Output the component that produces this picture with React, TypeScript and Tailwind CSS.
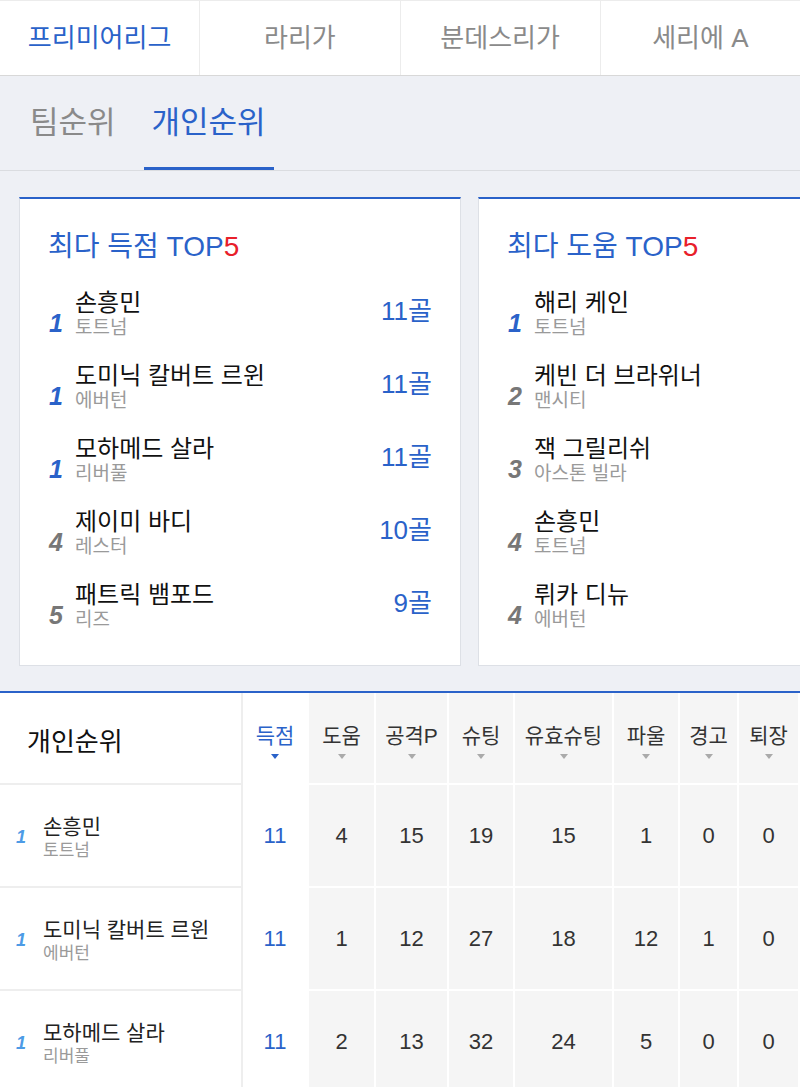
import React from "react";

const leagues = ["프리미어리그", "라리가", "분데스리가", "세리에 A"];

interface RankRow {
  rank: number;
  name: string;
  team: string;
  value?: string;
}

const scorers: RankRow[] = [
  { rank: 1, name: "손흥민", team: "토트넘", value: "11골" },
  { rank: 1, name: "도미닉 칼버트 르윈", team: "에버턴", value: "11골" },
  { rank: 1, name: "모하메드 살라", team: "리버풀", value: "11골" },
  { rank: 4, name: "제이미 바디", team: "레스터", value: "10골" },
  { rank: 5, name: "패트릭 뱀포드", team: "리즈", value: "9골" },
];

const assists: RankRow[] = [
  { rank: 1, name: "해리 케인", team: "토트넘" },
  { rank: 2, name: "케빈 더 브라위너", team: "맨시티" },
  { rank: 3, name: "잭 그릴리쉬", team: "아스톤 빌라" },
  { rank: 4, name: "손흥민", team: "토트넘" },
  { rank: 4, name: "뤼카 디뉴", team: "에버턴" },
];

const columns = [
  { label: "득점", w: "w-[66px]" },
  { label: "도움", w: "w-[67px]" },
  { label: "공격P", w: "w-[73px]" },
  { label: "슈팅", w: "w-[66px]" },
  { label: "유효슈팅", w: "w-[99px]" },
  { label: "파울", w: "w-[66px]" },
  { label: "경고", w: "w-[59px]" },
  { label: "퇴장", w: "w-[61px]" },
];

const players = [
  { rank: 1, name: "손흥민", team: "토트넘", stats: [11, 4, 15, 19, 15, 1, 0, 0] },
  { rank: 1, name: "도미닉 칼버트 르윈", team: "에버턴", stats: [11, 1, 12, 27, 18, 12, 1, 0] },
  { rank: 1, name: "모하메드 살라", team: "리버풀", stats: [11, 2, 13, 32, 24, 5, 0, 0] },
];

const TopCard = ({ title, rows }: { title: string; rows: RankRow[] }) => (
  <div className="w-[442px] shrink-0 bg-white border border-[#dde0e6] border-t-2 border-t-[#2a62c9] pl-[25px] pr-7 pt-[30px] pb-[34px]">
    <h3 className="pl-[3px] text-[28px] leading-[36px] text-[#2a62c9]">
      {title} TOP<span className="text-[#e8202a]">5</span>
    </h3>
    <ul className="mt-[24px] flex flex-col gap-[23px]">
      {rows.map((r, i) => (
        <li key={i} className="flex items-end">
          <span
            className={`w-[18px] mb-[3px] text-right text-[25px] leading-none font-bold italic ${
              r.rank === 1 ? "text-[#2a62c9]" : "text-[#777]"
            }`}
          >
            {r.rank}
          </span>
          <div className="ml-3 flex flex-col">
            <span className="text-[24px] leading-[28px] text-[#111]">{r.name}</span>
            <span className="text-[19px] leading-[22px] text-[#9a9a9a]">{r.team}</span>
          </div>
          {r.value && (
            <span className="ml-auto self-center mb-[6px] text-[26px] text-[#2a62c9]">{r.value}</span>
          )}
        </li>
      ))}
    </ul>
  </div>
);

const App = () => {
  return (
    <div className="w-[800px] overflow-hidden bg-white font-['Liberation_Sans','Noto_Sans_CJK_KR',sans-serif]">
      {/* league tabs */}
      <div className="flex h-[76px] border-t border-t-[#ececec] border-b border-b-[#d8d8d8] bg-white">
        {leagues.map((l, i) => (
          <div
            key={l}
            className={`flex-1 flex items-center justify-center text-[26px] ${
              i === 0 ? "text-[#2a62c9]" : "text-[#8a8a8a] border-l border-l-[#ececec]"
            }`}
          >
            {l}
          </div>
        ))}
      </div>

      {/* sub tabs */}
      <div className="flex h-[95px] gap-[20px] pl-[22px] bg-[#eef0f5] border-b border-[#dadce0]">
        <div className="flex items-center px-2 pt-1 text-[31px] text-[#8a8a8a] border-b-[3px] border-transparent">
          팀순위
        </div>
        <div className="flex items-center px-2 pt-1 text-[31px] text-[#2a62c9] border-b-[3px] border-[#2a62c9]">
          개인순위
        </div>
      </div>

      {/* top5 cards */}
      <div className="flex gap-[17px] pl-[19px] pt-[26px] pb-[25px] bg-[#eef0f5]">
        <TopCard title="최다 득점" rows={scorers} />
        <TopCard title="최다 도움" rows={assists} />
      </div>

      {/* player table */}
      <div className="border-t-2 border-[#2a62c9] bg-white">
        <div className="flex">
          <div className="w-[243px] shrink-0 h-[92px] flex items-center pl-[27px] pt-2 text-[26px] text-[#111] border-r-2 border-r-[#eeeeee] border-b-2 border-b-[#eeeeee]">
            개인순위
          </div>
          {columns.map((c, i) => (
            <div
              key={c.label}
              className={`${c.w} shrink-0 h-[92px] flex flex-col items-center pt-[30px] border-r-2 border-b-2 border-white ${
                i === 0 ? "bg-white" : "bg-[#f5f5f5]"
              }`}
            >
              <span className={`text-[21px] leading-[26px] ${i === 0 ? "text-[#2a62c9]" : "text-[#333]"}`}>
                {c.label}
              </span>
              <span
                className={`mt-[5px] w-0 h-0 border-l-4 border-r-4 border-t-[5px] border-l-transparent border-r-transparent ${
                  i === 0 ? "border-t-[#2a62c9]" : "border-t-[#aaaaaa]"
                }`}
              />
            </div>
          ))}
        </div>

        {players.map((p, ri) => (
          <div key={ri} className="flex">
            <div className="w-[243px] shrink-0 h-[103px] flex items-center pl-4 pt-1 border-r-2 border-r-[#eeeeee] border-b-2 border-b-[#eeeeee]">
              <span className="w-3 text-[18px] font-bold italic text-[#4d9be6]">{p.rank}</span>
              <div className="ml-[15px] flex flex-col">
                <span className="text-[21px] leading-[25px] text-[#222]">{p.name}</span>
                <span className="text-[17px] leading-[23px] text-[#9a9a9a]">{p.team}</span>
              </div>
            </div>
            {p.stats.map((s, i) => (
              <div
                key={i}
                className={`${columns[i].w} shrink-0 h-[103px] flex items-center justify-center text-[22px] border-r-2 border-b-2 border-white ${
                  i === 0 ? "bg-white text-[#2a62c9]" : "bg-[#f5f5f5] text-[#333]"
                }`}
              >
                {s}
              </div>
            ))}
          </div>
        ))}
      </div>
    </div>
  );
};

export default App;
